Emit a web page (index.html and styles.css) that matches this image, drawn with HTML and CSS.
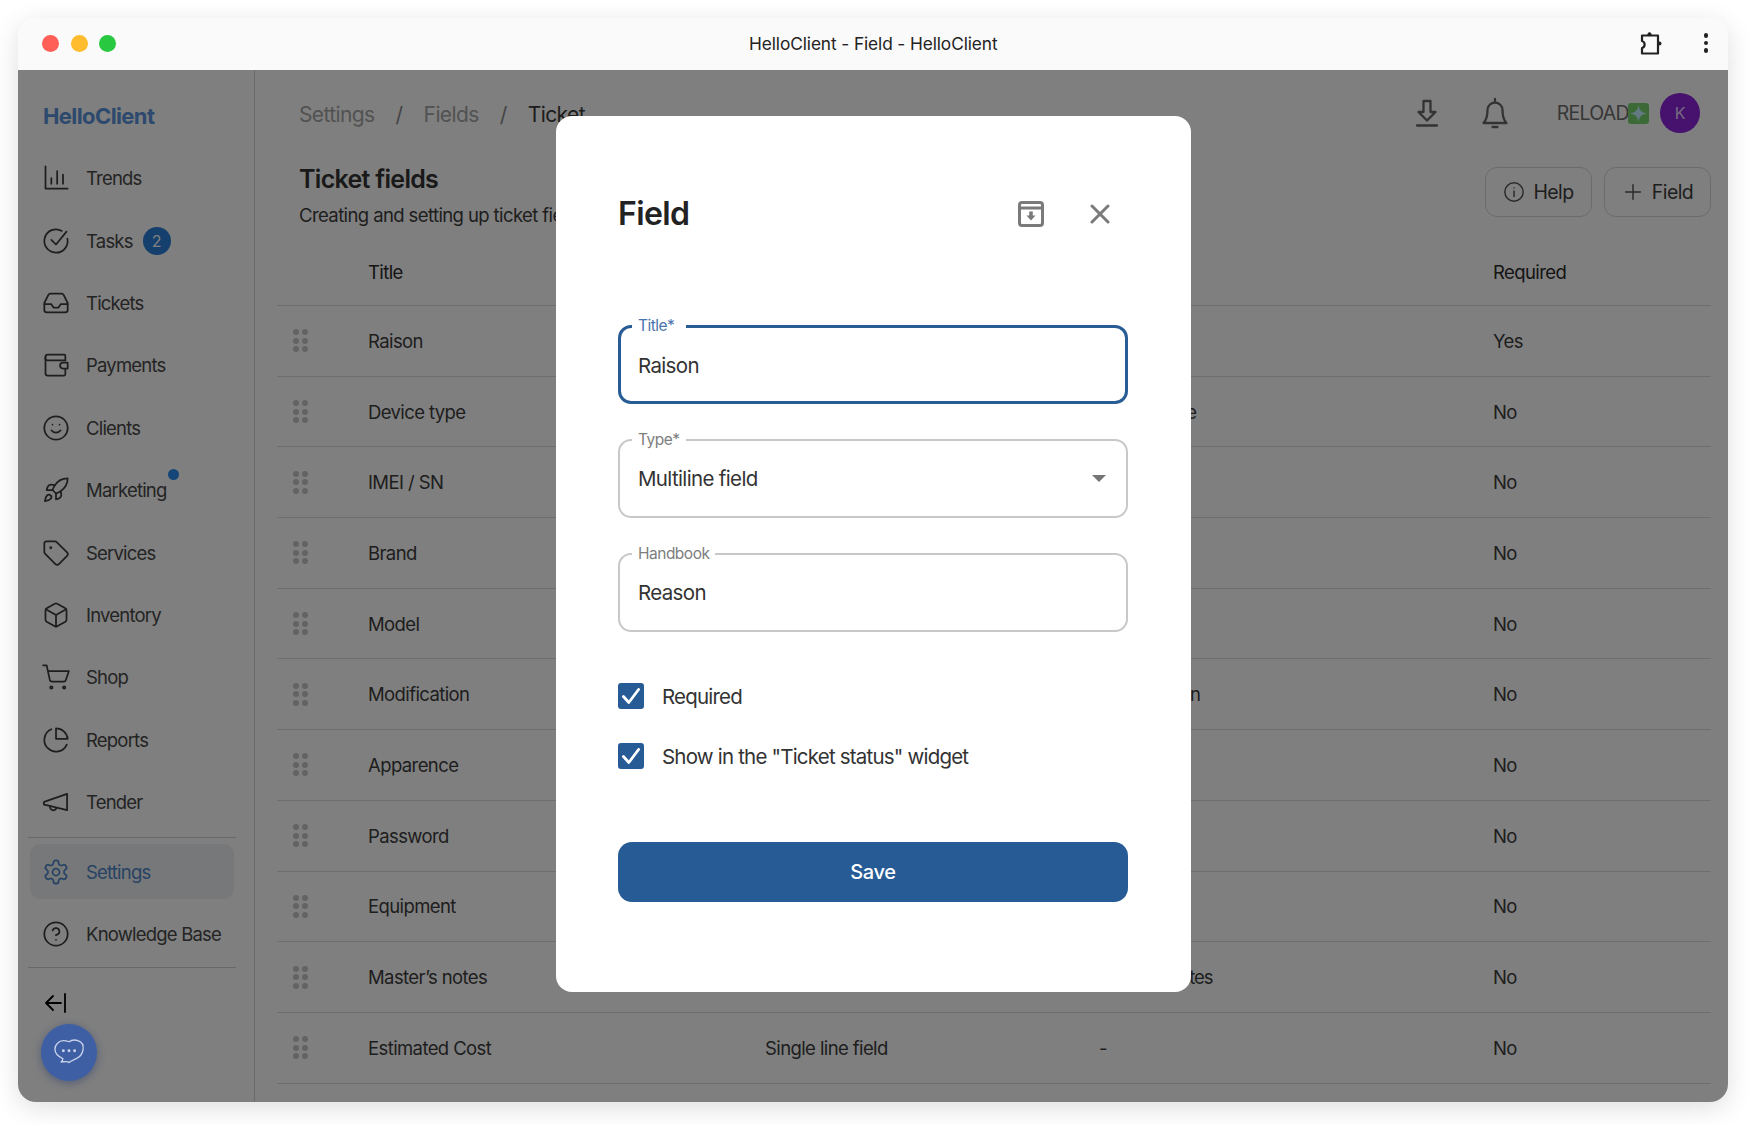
FILE: index.html
```html
<!DOCTYPE html>
<html lang="en">
<head>
<meta charset="utf-8">
<title>HelloClient - Field - HelloClient</title>
<link rel="stylesheet" href="styles.css">
</head>
<body>
<div class="window">
  <header class="titlebar">
    <div class="lights"><span class="light red"></span><span class="light yellow"></span><span class="light green"></span></div>
    <div class="wintitle">HelloClient - Field - HelloClient</div>
    <div class="winactions">
      <svg class="ic-puzzle" viewBox="0 0 24 24" fill="none" stroke="currentColor" stroke-width="2.200" stroke-linejoin="round"><path d="M3 4.500H19V22.500H3V17C6.500 16 6.500 11 3 10z"/><circle cx="10.500" cy="3.200" r="2" fill="currentColor" stroke="none"/><circle cx="20.500" cy="12.500" r="2" fill="currentColor" stroke="none"/></svg>
      <span class="kebab"><i></i><i></i><i></i></span>
    </div>
  </header>
  <div class="app">
    <aside class="sidebar">
      <div class="logo">HelloClient</div>
      <nav class="nav">
        <a class="item"><svg class="ic" viewBox="0 0 24 24"><path d="M3 2v19h19M8 17v-5M13 17V6M18 17v-8"/></svg><span>Trends</span></a>
        <a class="item"><svg class="ic" viewBox="0 0 24 24"><path d="M21.800 10A10 10 0 1 1 17 3.340"/><path d="m8 11 4 4L21 4"/></svg><span>Tasks</span><b class="badge">2</b></a>
        <a class="item"><svg class="ic" viewBox="0 0 24 24"><polyline points="22 13 16 13 14 16 10 16 8 13 2 13"/><path d="M5.450 5.110 2 12v6a2 2 0 0 0 2 2h16a2 2 0 0 0 2-2v-6l-3.450-6.890A2 2 0 0 0 16.760 4H7.240a2 2 0 0 0-1.790 1.110z"/></svg><span>Tickets</span></a>
        <a class="item"><svg class="ic" viewBox="0 0 24 24"><path d="M20 8V4a1 1 0 0 0-1-1H5a2 2 0 0 0-2 2v14a2 2 0 0 0 2 2h14a1 1 0 0 0 1-1v-4"/><path d="M3 5a2 2 0 0 0 2 3h15"/><path d="M22 10v5h-4a2.500 2.500 0 0 1 0-5z"/></svg><span>Payments</span></a>
        <a class="item"><svg class="ic" viewBox="0 0 24 24"><circle cx="12" cy="12" r="10"/><path d="M8 14s1.500 2 4 2 4-2 4-2M9 9h.01M15 9h.01"/></svg><span>Clients</span></a>
        <a class="item"><svg class="ic" viewBox="0 0 24 24"><path d="M4.500 16.500c-1.500 1.260-2 5-2 5s3.740-.5 5-2c.71-.84.7-2.130-.09-2.910a2.180 2.180 0 0 0-2.910-.09z"/><path d="m12 15-3-3a22 22 0 0 1 2-3.950A12.880 12.880 0 0 1 22 2c0 2.720-.78 7.500-6 11a22.350 22.350 0 0 1-4 2z"/><path d="M9 12H4s.55-3.030 2-4c1.620-1.080 5 0 5 0M12 15v5s3.030-.55 4-2c1.080-1.620 0-5 0-5"/></svg><span class="dotted">Marketing</span></a>
        <a class="item"><svg class="ic" viewBox="0 0 24 24"><path d="M12.590 2.590A2 2 0 0 0 11.170 2H4a2 2 0 0 0-2 2v7.170a2 2 0 0 0 .59 1.410l8.700 8.700a2.430 2.430 0 0 0 3.420 0l6.580-6.580a2.430 2.430 0 0 0 0-3.420z"/><circle cx="7.500" cy="7.500" r=".5"/></svg><span>Services</span></a>
        <a class="item"><svg class="ic" viewBox="0 0 24 24"><path d="M21 8a2 2 0 0 0-1-1.730l-7-4a2 2 0 0 0-2 0l-7 4A2 2 0 0 0 3 8v8a2 2 0 0 0 1 1.730l7 4a2 2 0 0 0 2 0l7-4A2 2 0 0 0 21 16Z"/><path d="m3.300 7 8.700 5 8.700-5M12 22V12"/></svg><span>Inventory</span></a>
        <a class="item"><svg class="ic" viewBox="0 0 24 24"><circle cx="8" cy="21" r="1"/><circle cx="19" cy="21" r="1"/><path d="M1 2h3l2.700 12.500a2 2 0 0 0 2 1.500h9.800a2 2 0 0 0 2-1.600L23 7H5.100"/></svg><span>Shop</span></a>
        <a class="item"><svg class="ic" viewBox="0 0 24 24"><path d="M21.200 15.900A10 10 0 1 1 8 2.800"/><path d="M22 11A10 10 0 0 0 12 2v9z"/></svg><span>Reports</span></a>
        <a class="item"><svg class="ic" viewBox="0 0 24 24"><path d="M21.500 5v14L3 14.500a1.500 1.500 0 0 1 0-3z"/><path d="M7 15.500a2.800 2.800 0 1 0 5.500 1.500"/></svg><span>Tender</span></a>
      </nav>
      <div class="rule rule-top"></div>
      <a class="item active"><svg class="ic" viewBox="0 0 24 24"><path d="M12.220 2h-.44a2 2 0 0 0-2 2v.18a2 2 0 0 1-1 1.730l-.43.25a2 2 0 0 1-2 0l-.15-.08a2 2 0 0 0-2.730.73l-.22.38a2 2 0 0 0 .73 2.730l.15.1a2 2 0 0 1 1 1.720v.51a2 2 0 0 1-1 1.740l-.15.09a2 2 0 0 0-.73 2.730l.22.38a2 2 0 0 0 2.730.73l.15-.08a2 2 0 0 1 2 0l.43.25a2 2 0 0 1 1 1.730V20a2 2 0 0 0 2 2h.44a2 2 0 0 0 2-2v-.18a2 2 0 0 1 1-1.730l.43-.25a2 2 0 0 1 2 0l.15.08a2 2 0 0 0 2.730-.73l.22-.39a2 2 0 0 0-.73-2.730l-.15-.08a2 2 0 0 1-1-1.740v-.5a2 2 0 0 1 1-1.740l.15-.09a2 2 0 0 0 .73-2.730l-.22-.38a2 2 0 0 0-2.730-.73l-.15.08a2 2 0 0 1-2 0l-.43-.25a2 2 0 0 1-1-1.730V4a2 2 0 0 0-2-2z"/><circle cx="12" cy="12" r="3"/></svg><span>Settings</span></a>
      <a class="item"><svg class="ic" viewBox="0 0 24 24"><circle cx="12" cy="12" r="10"/><path d="M9.090 9a3 3 0 0 1 5.830 1c0 2-3 3-3 3M12 17h.01"/></svg><span>Knowledge Base</span></a>
      <div class="rule rule-end"></div>
      <svg class="collapse" viewBox="0 0 24 24"><path d="M21 3v18M17 12H2M9 5l-7 7 7 7"/></svg>
    </aside>
    <main class="main">
      <div class="topbar">
        <div class="crumbs"><span class="crumb">Settings</span><span class="crumb slash">/</span><span class="crumb">Fields</span><span class="crumb slash">/</span><span class="crumb current">Ticket</span></div>
        <div class="tools">
          <svg class="tool ic-dl" viewBox="0 0 24 28"><path d="M8.500 2h7v11h5L12 21.500 3.500 13h5zM2 26.500h20"/></svg>
          <svg class="tool ic-bell" viewBox="0 0 28 32"><path d="M14 2v2.500M6.500 13a7.500 7.500 0 0 1 15 0c0 6 1 10 4 13H2.500c3-3 4-7 4-13zM11.500 30h5"/></svg>
          <div class="reload">RELOAD<span class="spark"><svg viewBox="0 0 20 20"><path d="M10 2c.8 5 3 7.200 8 8-5 .8-7.200 3-8 8-.8-5-3-7.200-8-8 5-.8 7.200-3 8-8z"/></svg></span></div>
          <div class="avatar">K</div>
        </div>
      </div>
      <div class="pagehead">
        <div class="pagetext">
          <h1 class="pagetitle">Ticket fields</h1>
          <p class="pagesub">Creating and setting up ticket fields</p>
        </div>
        <div class="pagebtns">
          <button class="btn"><svg class="btn-ic" viewBox="0 0 24 24"><circle cx="12" cy="12" r="10"/><path d="M12 11v6M12 7.500h.01"/></svg>Help</button>
          <button class="btn"><svg class="btn-ic" viewBox="0 0 24 24"><path d="M12 4v16M4 12h16"/></svg>Field</button>
        </div>
      </div>
      <div class="table">
        <div class="row head"><span></span><span>Title</span><span>Type</span><span>Handbook</span><span>Required</span></div>
        <div class="row"><span class="grip"><i></i><i></i><i></i><i></i><i></i><i></i></span><span>Raison</span><span>Multiline field</span><span>Reason</span><span>Yes</span></div>
        <div class="row"><span class="grip"><i></i><i></i><i></i><i></i><i></i><i></i></span><span>Device type</span><span>Single line field</span><span>Device type</span><span>No</span></div>
        <div class="row"><span class="grip"><i></i><i></i><i></i><i></i><i></i><i></i></span><span>IMEI / SN</span><span>Single line field</span><span>-</span><span>No</span></div>
        <div class="row"><span class="grip"><i></i><i></i><i></i><i></i><i></i><i></i></span><span>Brand</span><span>Single line field</span><span>Brand</span><span>No</span></div>
        <div class="row"><span class="grip"><i></i><i></i><i></i><i></i><i></i><i></i></span><span>Model</span><span>Single line field</span><span>Model</span><span>No</span></div>
        <div class="row"><span class="grip"><i></i><i></i><i></i><i></i><i></i><i></i></span><span>Modification</span><span>Single line field</span><span>Modification</span><span>No</span></div>
        <div class="row"><span class="grip"><i></i><i></i><i></i><i></i><i></i><i></i></span><span>Apparence</span><span>Single line field</span><span>Apparence</span><span>No</span></div>
        <div class="row"><span class="grip"><i></i><i></i><i></i><i></i><i></i><i></i></span><span>Password</span><span>Single line field</span><span>-</span><span>No</span></div>
        <div class="row"><span class="grip"><i></i><i></i><i></i><i></i><i></i><i></i></span><span>Equipment</span><span>Single line field</span><span>-</span><span>No</span></div>
        <div class="row"><span class="grip"><i></i><i></i><i></i><i></i><i></i><i></i></span><span>Master’s notes</span><span>Multiline field</span><span class="narrow">Master’s notes</span><span>No</span></div>
        <div class="row"><span class="grip"><i></i><i></i><i></i><i></i><i></i><i></i></span><span>Estimated Cost</span><span>Single line field</span><span>-</span><span>No</span></div>
      </div>
    </main>
    <div class="overlay"></div>
    <div class="chat"><svg viewBox="0 0 32 32"><path d="M16 6c2-1.500 5-2 8-1 3.500 1.200 5 4.500 4.500 8-.5 4-3.500 7-7 8.500-2 .9-4 1.500-5.500 3-1-1.500-3-1-7-.5 1-1 1.500-2 1.500-3C6 19 3.500 16 3.500 12.500 3.500 8.500 7 5 11 5c2 0 3.500.3 5 1z"/><circle cx="11" cy="14" r="1.300" class="fill"/><circle cx="16" cy="14" r="1.300" class="fill"/><circle cx="21" cy="14" r="1.300" class="fill"/></svg></div>
    <section class="modal">
      <div class="modalhead">
        <h2 class="modaltitle">Field</h2>
        <svg class="mi mi-arch" viewBox="0 0 26 26"><rect x="1.500" y="1.500" width="23" height="23" rx="2.500"/><path d="M1.500 7h23"/><path class="solid" d="M11.200 10.500h3.600v4h2.700L13 19.500l-4.500-5h2.700z"/></svg>
        <svg class="mi mi-close" viewBox="0 0 20 20"><path d="M2 2l16 16M18 2L2 18"/></svg>
      </div>
      <div class="field focus"><span class="flabel">Title*</span><span class="fvalue">Raison</span></div>
      <div class="field"><span class="flabel">Type*</span><span class="fvalue">Multiline field</span><i class="caret"></i></div>
      <div class="field"><span class="flabel">Handbook</span><span class="fvalue">Reason</span></div>
      <div class="checks">
        <label class="check"><span class="box"><svg viewBox="0 0 24 24"><path d="M5 12.500l5 5.500 9-12"/></svg></span>Required</label>
        <label class="check"><span class="box"><svg viewBox="0 0 24 24"><path d="M5 12.500l5 5.500 9-12"/></svg></span>Show in the "Ticket status" widget</label>
      </div>
      <button class="save">Save</button>
    </section>
  </div>
</div>
</body>
</html>
```
FILE: styles.css
```css
* { box-sizing: border-box; }
html, body { margin: 0; height: 100%; background: #fff; }
body {
  padding: 18px 22px 0 18px;
  font-family: Inter, "Liberation Sans", sans-serif;
  color: #3c3c3c;
  overflow: hidden;
}
.window {
  height: 1084px;
  border-radius: 18px;
  overflow: hidden;
  display: flex;
  flex-direction: column;
  box-shadow: 0 6px 26px rgba(0,0,0,.13);
  background: #fff;
}
.titlebar {
  height: 52px;
  flex: none;
  background: #fafafa;
  display: flex;
  align-items: center;
  padding: 0 20px 2px 24px;
}
.lights { display: flex; gap: 11.5px; }
.light { width: 17px; height: 17px; border-radius: 50%; }
.red { background: #ff5f57; }
.yellow { background: #febc2e; }
.green { background: #28c840; }
.wintitle {
  flex: 1;
  text-align: center;
  font-size: 17.3px;
  letter-spacing: -.1px;
  color: #222;
  margin-left: -8px;
}
.winactions { display: flex; align-items: center; gap: 41px; color: #222; }
.ic-puzzle { width: 24px; height: 24px; }
.kebab { display: flex; flex-direction: column; gap: 3px; }
.kebab i { width: 4.5px; height: 4.5px; border-radius: 50%; background: #222; display: block; }

.app { flex: 1; display: flex; position: relative; min-height: 0; }
.sidebar {
  width: 237px;
  flex: none;
  border-right: 1px solid #d6d6d6;
  display: flex;
  flex-direction: column;
  padding: 0 18px 0 10px;
}
.logo {
  height: 77px;
  display: flex;
  align-items: center;
  padding: 14px 0 0 15px;
  font-size: 22px;
  font-weight: 700;
  letter-spacing: -.6px;
  color: #5a93da;
}
.nav { display: flex; flex-direction: column; }
.item {
  height: 62.4px;
  display: flex;
  align-items: center;
  gap: 16px;
  padding-left: 14px;
  font-size: 18.5px;
  letter-spacing: -.8px;
  color: #484848;
  position: relative;
  flex: none;
}
.ic {
  width: 28px;
  height: 28px;
  flex: none;
  fill: none;
  stroke: #3c3c3c;
  stroke-width: 1.500;
  stroke-linecap: round;
  stroke-linejoin: round;
}
.badge {
  width: 28px;
  height: 28px;
  border-radius: 50%;
  background: #2a7ed8;
  color: #fff;
  font-size: 16px;
  font-weight: 400;
  letter-spacing: 0;
  display: flex;
  align-items: center;
  justify-content: center;
  margin-left: -6px;
}
.dotted { position: relative; }
.dotted::after {
  content: "";
  position: absolute;
  width: 11px;
  height: 11px;
  border-radius: 50%;
  background: #2a8cf0;
  right: -12px;
  top: -10px;
}
.rule { height: 1px; background: #d0d0d0; flex: none; }
.rule-top { margin-top: 4px; }
.rule-end { margin-top: 2px; }
.active {
  height: 55px;
  margin: 6px 2px 3.5px 2px;
  padding-left: 12px;
  border-radius: 10px;
  background: #eff0f2;
  color: #4f86c9;
}
.active .ic { stroke: #4f86c9; }
.collapse {
  width: 24px;
  height: 24px;
  margin: 23px 0 0 16px;
  fill: none;
  stroke: #000;
  stroke-width: 1.800;
  stroke-linecap: round;
  stroke-linejoin: round;
  flex: none;
}

.main { flex: 1; min-width: 0; display: flex; flex-direction: column; padding: 0 17px 0 22px; }
.topbar {
  height: 86px;
  flex: none;
  display: flex;
  align-items: center;
  justify-content: space-between;
  padding: 0 11px 0 22px;
}
.crumbs { display: flex; gap: 21px; font-size: 21px; letter-spacing: -.6px; padding-top: 2px; }
.crumb { color: #a4a4a4; }
.crumb.current { color: #3a3a3a; }
.crumb.slash { color: #8a8a8a; }
.tools { display: flex; align-items: center; }
.tool { fill: none; stroke: #666; stroke-width: 2.300; stroke-linejoin: round; stroke-linecap: round; }
.ic-dl { width: 24px; height: 28px; margin-right: 42px; }
.ic-bell { width: 28px; height: 32px; margin-right: 48px; }
.reload { display: flex; align-items: center; font-size: 19.5px; letter-spacing: -.7px; color: #6e6e6e; }
.spark { width: 21px; height: 21px; background: #79d46f; border-radius: 3px; display: inline-flex; margin-left: -1px; }
.spark svg { width: 100%; height: 100%; fill: #c4f2ff; }
.avatar {
  width: 40px;
  height: 40px;
  border-radius: 50%;
  background: #8c25dd;
  color: #e6d6ff;
  display: flex;
  align-items: center;
  justify-content: center;
  font-size: 16px;
  margin-left: 11px;
}
.pagehead { display: flex; justify-content: space-between; flex: none; padding-left: 22px; height: 73px; padding-top: 11px; }
.pagetitle { margin: -5px 0 0; font-size: 25px; line-height: 34px; font-weight: 600; letter-spacing: -.7px; color: #333; }
.pagesub { margin: 7px 0 0; font-size: 18.5px; line-height: 24px; letter-spacing: -.6px; color: #3c3c3c; white-space: nowrap; }
.pagebtns { display: flex; gap: 12px; }
.btn {
  width: 107px;
  height: 50px;
  padding: 0;
  display: flex;
  align-items: center;
  justify-content: center;
  gap: 8px;
  border: 1px solid #d6d6d6;
  border-radius: 12px;
  background: transparent;
  font: inherit;
  font-size: 19.5px;
  letter-spacing: -.6px;
  color: #3c3c3c;
}
.btn-ic { width: 22px; height: 22px; fill: none; stroke: #555; stroke-width: 1.600; stroke-linecap: round; }
.row {
  display: grid;
  grid-template-columns: 91px 397px 334px 394px 1fr;
  height: 70.7px;
  align-items: center;
  border-bottom: 1px solid #dcdcdc;
  font-size: 18.5px;
  letter-spacing: -.6px;
  color: #3c3c3c;
}
.row.head { height: 77px; padding-top: 10px; color: #2a2a2a; }
.narrow { letter-spacing: -1px; }
.grip {
  display: grid;
  grid-template-columns: 6px 6px;
  grid-auto-rows: 6px;
  gap: 2.500px;
  justify-content: start;
  padding-left: 16px;
}
.grip i { width: 6px; height: 6px; border-radius: 50%; background: #c6c6c6; display: block; }

.overlay { position: absolute; inset: 0; background: rgba(0,0,0,.5); }
.chat {
  position: absolute;
  left: 23px;
  bottom: 21px;
  width: 56px;
  height: 57px;
  border-radius: 50%;
  background: #3e5fa4;
  box-shadow: 0 2px 8px rgba(30,50,110,.45);
  display: flex;
  align-items: center;
  justify-content: center;
}
.chat svg { width: 36px; height: 36px; fill: none; stroke: #c8d2ea; stroke-width: 1.200; stroke-linejoin: round; }
.chat .fill { fill: #c8d2ea; stroke: none; }

.modal {
  position: absolute;
  left: 538px;
  top: 46px;
  width: 635px;
  height: 876px;
  border-radius: 16px;
  background: #fff;
  padding: 0 63px 0 62px;
  display: flex;
  flex-direction: column;
}
.modalhead { display: flex; align-items: center; height: 209px; padding-bottom: 14px; flex: none; }
.modaltitle { margin: 0; flex: 1; font-size: 32px; font-weight: 600; letter-spacing: -.6px; color: #222; }
.mi { fill: none; stroke: #7a7a7a; stroke-width: 3; stroke-linecap: round; stroke-linejoin: round; }
.mi-arch { width: 26px; height: 26px; margin-right: 46px; }
.mi-arch .solid { fill: #7a7a7a; stroke: none; }
.mi-close { width: 20px; height: 20px; margin-right: 18px; }
.field {
  height: 79px;
  border: 2px solid #c8c8c8;
  border-radius: 13px;
  display: flex;
  align-items: center;
  padding: 0 0 0 18px;
  margin-bottom: 35px;
  position: relative;
  flex: none;
}
.field.focus { border: 3px solid #285c94; padding: 1px 0 0 17px; }
.flabel {
  position: absolute;
  left: 12px;
  top: -11px;
  padding: 0 6px;
  background: #fff;
  font-size: 15.5px;
  line-height: 19px;
  letter-spacing: -.5px;
  color: #7d7d7d;
}
.focus .flabel { color: #4a74ad; left: 11px; top: -12px; padding-right: 12px; }
.fvalue { font-size: 20.5px; letter-spacing: -.65px; color: #333; }
.caret {
  position: absolute;
  right: 20px;
  top: 34px;
  width: 0;
  height: 0;
  border-left: 7px solid transparent;
  border-right: 7px solid transparent;
  border-top: 7px solid #757575;
}
.checks { display: flex; flex-direction: column; gap: 34px; margin-top: 16px; }
.check { display: flex; align-items: center; gap: 18px; font-size: 20.5px; letter-spacing: -.8px; color: #333; height: 26px; }
.box { width: 26px; height: 26px; border-radius: 3px; background: #265b96; display: flex; flex: none; }
.box svg { width: 100%; height: 100%; fill: none; stroke: #fff; stroke-width: 2.600; stroke-linecap: round; stroke-linejoin: round; }
.save {
  margin-top: 73px;
  height: 60px;
  border: 0;
  border-radius: 14px;
  background: #265b96;
  color: #fff;
  font: inherit;
  font-size: 20px;
  font-weight: 500;
  letter-spacing: -.3px;
  flex: none;
}
```
